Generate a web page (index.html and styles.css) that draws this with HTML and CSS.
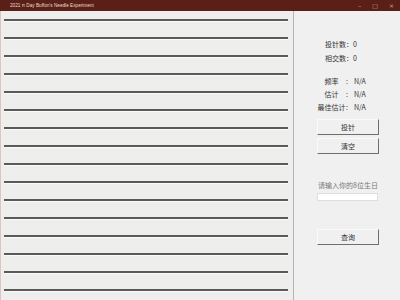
FILE: index.html
```html
<!DOCTYPE html>
<html lang="zh-CN">
<head>
    <meta charset="UTF-8">
    <meta name="viewport" content="width=device-width, initial-scale=1.0">
    <title>Buffon's Needle</title>
    <link rel="stylesheet" href="styles.css">
</head>
<body>
    <div class="window">
        <div class="titlebar">
            <span class="title">2021 π Day Buffon's Needle Experiment</span>
            <div class="controls">
                <span>–</span>
                <span>□</span>
                <span>×</span>
            </div>
        </div>
        <div class="main">
            <div class="canvas">
                <div class="line"></div>
                <div class="line"></div>
                <div class="line"></div>
                <div class="line"></div>
                <div class="line"></div>
                <div class="line"></div>
                <div class="line"></div>
                <div class="line"></div>
                <div class="line"></div>
                <div class="line"></div>
                <div class="line"></div>
                <div class="line"></div>
                <div class="line"></div>
                <div class="line"></div>
                <div class="line"></div>
                <div class="line"></div>
            </div>
            <div class="panel">
                <p class="count first">投针数：0</p>
                <p class="count">相交数：0</p>
                <div class="stats">
                    <span class="name">频率</span><span>:</span><span>N/A</span>
                    <span class="name">估计</span><span>:</span><span>N/A</span>
                    <span class="name">最佳估计</span><span>:</span><span>N/A</span>
                </div>
                <button class="btn throw">投针</button>
                <button class="btn">清空</button>
                <label class="hint" for="birthday">请输入你的8位生日</label>
                <input class="birthday" id="birthday" type="text">
                <button class="btn query">查询</button>
            </div>
        </div>
    </div>
</body>
</html>
```

FILE: styles.css
```css
body {
    margin: 0;
    font-family: "Noto Sans CJK SC", "Liberation Sans", sans-serif;
}

.window {
    width: 400px;
    height: 300px;
    overflow: hidden;
    background-color: #f0f0f0;
}

.titlebar {
    height: 11px;
    display: flex;
    align-items: center;
    justify-content: space-between;
    background-color: #5a1f16;
    color: #eadbd5;
}

.title {
    padding-left: 10px;
    font-family: "Liberation Sans", sans-serif;
    font-size: 4.7px;
}

.controls {
    display: flex;
    gap: 11px;
    padding-right: 6px;
    font-family: "DejaVu Sans", sans-serif;
    font-size: 6px;
    color: #c9aaa2;
}

.main {
    display: flex;
    height: 289px;
}

.canvas {
    width: 289px;
    padding: 8px 0 0 3px;
    border-left: 1px solid #dcc5c1;
    display: flex;
    flex-direction: column;
    gap: 16px;
    background-color: #eeeeec;
}

.line {
    width: 284px;
    height: 2px;
    background-color: #5a5a5a;
    box-shadow: 0 1px 0 #fbfbfb;
}

.panel {
    width: 60px;
    padding-left: 23px;
    border-left: 1px solid #b4b4b4;
    display: flex;
    flex-direction: column;
    align-items: flex-start;
    color: #333;
    font-size: 7px;
}

.count {
    margin: 4px 0 0 8px;
    line-height: 10px;
}

.count.first {
    margin-top: 28px;
}

.stats {
    margin-top: 13px;
    display: grid;
    grid-template-columns: 29px 8px auto;
    row-gap: 3px;
    line-height: 10px;
}

.stats .name {
    text-align: center;
}

.btn {
    width: 62px;
    height: 16px;
    margin-top: 3px;
    padding: 0;
    background-color: #f0f0f0;
    border: 1px solid;
    border-color: #fafafa #6e6e6e #6e6e6e #fafafa;
    font-family: "Noto Sans CJK SC", sans-serif;
    font-size: 7px;
    color: #333;
}

.btn.throw {
    margin-top: 7px;
}

.hint {
    margin-top: 26px;
    width: 62px;
    text-align: center;
    line-height: 10px;
    color: #777;
}

.birthday {
    margin-top: 3px;
    width: 59px;
    height: 6px;
    padding: 0;
    border: 1px solid #dedede;
    background-color: #fff;
}

.btn.query {
    margin-top: 28px;
}
```
